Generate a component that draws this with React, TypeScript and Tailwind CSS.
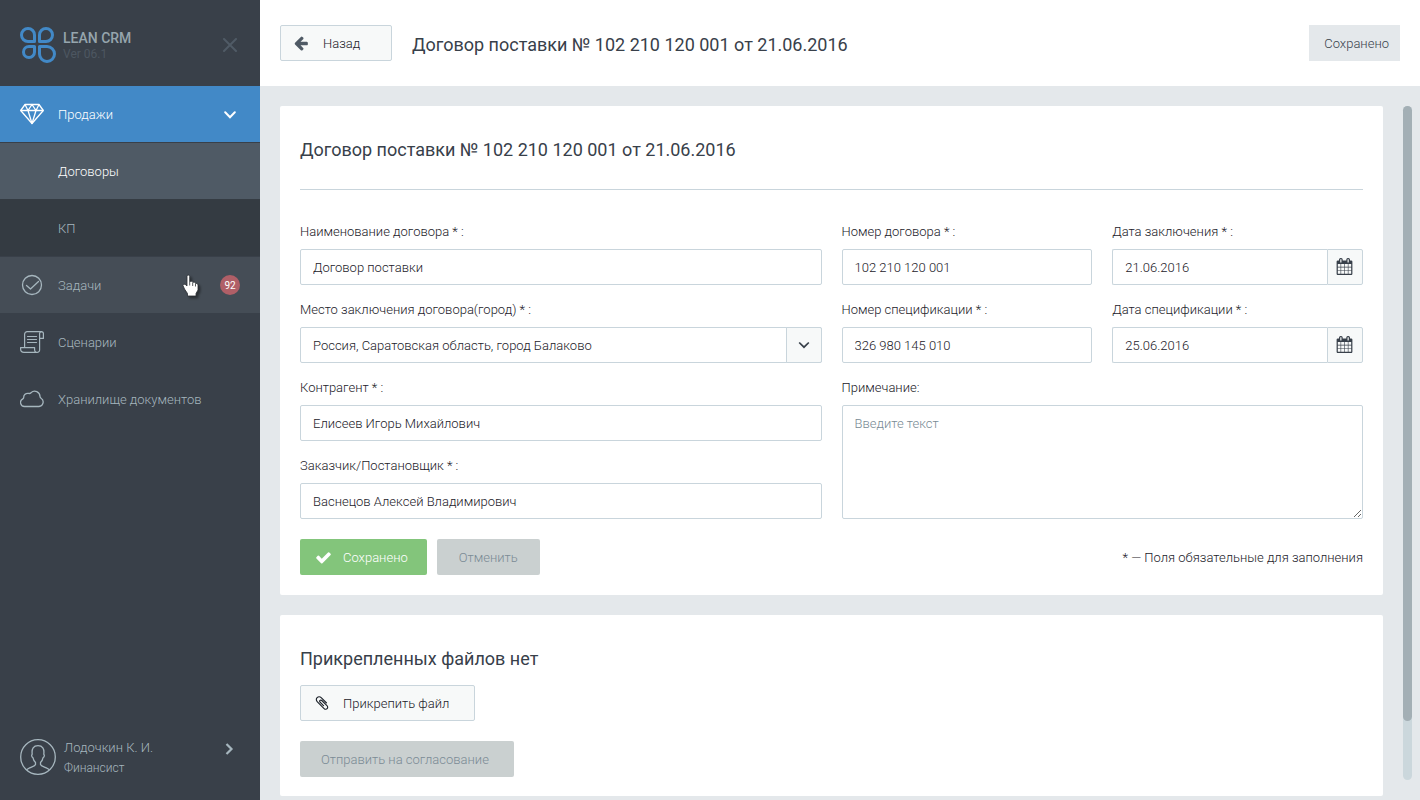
import React from "react";

type IconProps = { className?: string };

const FA = {
  arrowLeft:
    "M1664 896v128q0 53-32.5 90.5t-84.5 37.5h-704l293 294q38 36 38 90t-38 90l-75 76q-37 37-90 37-52 0-91-37l-651-652q-37-37-37-90 0-52 37-91l651-650q38-38 91-38 52 0 90 38l75 74q38 38 38 91t-38 91l-293 293h704q52 0 84.5 37.5t32.5 90.5z",
  check:
    "M1671 566q0 40-28 68l-724 724-136 136q-28 28-68 28t-68-28l-136-136-362-362q-28-28-28-68t28-68l136-136q28-28 68-28t68 28l294 295 656-657q28-28 68-28t68 28l136 136q28 28 28 68z",
  paperclip:
    "M1596 1385q0 117-79 196t-196 79q-135 0-235-100l-777-776q-113-115-113-271 0-159 110-270t269-111q158 0 273 113l605 606q10 10 10 22 0 16-30.5 46.5t-46.5 30.5q-13 0-23-10l-606-607q-79-77-181-77-106 0-179 75t-73 181q0 105 76 181l776 777q63 63 145 63 64 0 106-42t42-106q0-82-63-145l-581-581q-26-24-60-24-29 0-48 19t-19 48q0 32 25 59l410 410q10 10 10 22 0 16-31 47t-47 31q-12 0-22-10l-410-410q-63-61-63-149 0-82 57-139t139-57q88 0 149 63l581 581q100 98 100 235z",
  calendar:
    "M192 1664h288v-288h-288v288zm352 0h320v-288h-320v288zm-352-352h288v-320h-288v320zm352 0h320v-320h-320v320zm-352-384h288v-288h-288v288zm736 736h320v-288h-320v288zm-384-736h320v-288h-320v288zm768 736h288v-288h-288v288zm-384-352h320v-320h-320v320zm-352-864v-288q0-13-9.5-22.5t-22.5-9.5h-64q-13 0-22.5 9.5t-9.5 22.5v288q0 13 9.5 22.5t22.5 9.5h64q13 0 22.5-9.5t9.5-22.5zm736 864h288v-320h-288v320zm-384-384h320v-288h-320v288zm384 0h288v-288h-288v288zm32-480v-288q0-13-9.5-22.5t-22.5-9.5h-64q-13 0-22.5 9.5t-9.5 22.5v288q0 13 9.5 22.5t22.5 9.5h64q13 0 22.5-9.5t9.5-22.5zm384-64v1280q0 52-38 90t-90 38h-1408q-52 0-90-38t-38-90v-1280q0-52 38-90t90-38h128v-96q0-66 47-113t113-47h64q66 0 113 47t47 113v96h384v-96q0-66 47-113t113-47h64q66 0 113 47t47 113v96h128q52 0 90 38t38 90z",
};

function Solid({ d, className }: { d: string; className?: string }) {
  return (
    <svg viewBox="0 0 1792 1792" className={className} fill="currentColor" aria-hidden="true">
      <path d={d} />
    </svg>
  );
}

function Logo() {
  return (
    <svg width="36" height="37" viewBox="0 0 36 37" fill="none" stroke="#4289c7" strokeWidth="3" strokeLinejoin="round" aria-hidden="true">
      <path d="M14.500 14.500H8A6.500 6.500 0 1 1 14.500 8Z" />
      <path d="M19.500 14.500V8A6.500 6.500 0 1 1 26 14.500Z" />
      <path d="M14.500 19.500V25A5.500 5.500 0 1 1 9 19.500Z" />
      <path d="M19.500 19.500H27A7.500 7.500 0 1 1 19.500 27Z" />
    </svg>
  );
}

function DiamondIcon({ className }: IconProps) {
  return (
    <svg width="24" height="22" viewBox="0 0 24 22" fill="none" stroke="currentColor" strokeWidth="1.3" strokeLinejoin="round" className={className} aria-hidden="true">
      <path d="M5 1.500h14l4.300 6L12 20.500.700 7.500Z" />
      <path d="M.700 7.500h22.600M5 1.500l3 6 4-6 4 6 3-6M8 7.500l4 13 4-13" />
    </svg>
  );
}

function TaskIcon({ className }: IconProps) {
  return (
    <svg width="24" height="22" viewBox="0 0 24 22" fill="none" stroke="currentColor" strokeWidth="1.300" strokeLinecap="round" strokeLinejoin="round" className={className} aria-hidden="true">
      <circle cx="12" cy="11" r="9.500" />
      <path d="M6.500 11.500l4 3.500L18.500 7.500" />
    </svg>
  );
}

function ScrollIcon({ className }: IconProps) {
  return (
    <svg width="24" height="22" viewBox="0 0 24 22" fill="none" stroke="currentColor" strokeWidth="1.200" strokeLinejoin="round" strokeLinecap="round" className={className} aria-hidden="true">
      <path d="M4.600 16.600V3.200A2.600 2.600 0 0 1 7.200.600H21.400A2 2 0 0 1 23.400 2.800V7.400H19.600V19A2.400 2.400 0 0 1 17.200 21.400H4A3.400 3.400 0 0 1 .600 18V16.600H14.600V18.600A2.600 2.600 0 0 0 17.200 21.400" />
      <path d="M19.600 7.400V2.800A2 2 0 0 1 21.400.600M7.500 5.500h9M7.500 8.500h9M7.500 11.500h9" />
    </svg>
  );
}

function CloudIcon({ className }: IconProps) {
  return (
    <svg width="24" height="18" viewBox="0 0 24 18" fill="none" stroke="currentColor" strokeWidth="1.300" strokeLinejoin="round" className={className} aria-hidden="true">
      <path d="M4.500 16.500A4 4 0 0 1 2.800 8.900 C3.200 8.600 3.700 8.200 3.700 7.600A4 4 0 0 1 8.500 3.400C9.500 3.600 10.300 3.500 11 2.700A5.300 5.300 0 0 1 20 6.600C20 7.400 20.300 7.900 21 8.200A4.500 4.500 0 0 1 19 16.500Z" />
    </svg>
  );
}

function UserIcon() {
  return (
    <svg width="36" height="36" viewBox="0 0 36 36" fill="none" stroke="currentColor" strokeWidth="1.300" strokeLinejoin="round" aria-hidden="true">
      <circle cx="18" cy="18" r="17.300" />
      <path d="M6.500 30.800L8.500 29.500C11 28 15 27.500 15.500 25.500V23.500C14 22 13.300 20.500 13 18.800 11.800 18 11.200 16.200 12.200 15.200 11.500 9.500 13.500 6.700 18 6.700S24.500 9.500 23.800 15.200C24.800 16.200 24.200 18 23 18.800 22.700 20.500 22 22 20.500 23.500V25.500C21 27.500 25 28 27.500 29.500L29.500 30.800" />
    </svg>
  );
}

function ChevronDown() {
  return (
    <svg width="12" height="8" viewBox="0 0 12 8" fill="none" stroke="currentColor" strokeWidth="2" strokeLinecap="round" aria-hidden="true">
      <path d="M1.200 1.300L6 6.200l4.800-4.900" />
    </svg>
  );
}

function SelectArrow() {
  return (
    <svg width="12" height="8" viewBox="0 0 12 8" fill="none" stroke="currentColor" strokeWidth="1.700" aria-hidden="true">
      <path d="M1.200 1.500L6 6.200l4.800-4.700" />
    </svg>
  );
}

function Pointer() {
  return (
    <svg width="20" height="26" viewBox="0 0 20 26" className="pointer-events-none absolute top-[17px] left-[182px]" style={{ filter: "drop-shadow(2px 2px 1px rgba(0,0,0,.4))" }} aria-hidden="true">
      <path
        d="M5 2.500Q5 1 6.300 1T7.700 2.500V7.500Q10.300 6.500 10.800 8.300 13 7.500 13.500 9.300 16 9 16 11V16L14 19.500V22H5.500V19.500L2.500 15 1 11.500Q1 10 3 10.200L5 12Z"
        fill="#fff"
        stroke="#2b2f34"
        strokeWidth=".8"
      />
      <path d="M7.700 7.500v4M10.700 8.500v3.500M13.500 9.500v3" stroke="#2b2f34" strokeWidth=".8" />
    </svg>
  );
}

const control =
  "h-9 w-full rounded-[2px] border border-[#c9d5dc] bg-white px-3 text-[13px] text-[#1b2129] outline-none";
const label = "mb-[9px] block pt-px text-[13px] leading-4";
const addon =
  "flex w-9 shrink-0 items-center justify-center rounded-r-[2px] border border-[#c9d5dc] bg-[#f7f9f9] text-[#38404a]";

function Field({ id, title, value, className }: { id: string; title: string; value: string; className?: string }) {
  return (
    <div className={className}>
      <label htmlFor={id} className={label}>{title}</label>
      <input id={id} type="text" defaultValue={value} className={control} />
    </div>
  );
}

function DateField({ id, title, value }: { id: string; title: string; value: string }) {
  return (
    <div>
      <label htmlFor={id} className={label}>{title}</label>
      <div className="flex">
        <input id={id} type="text" defaultValue={value} className="h-9 w-full min-w-0 flex-1 rounded-l-[2px] border border-r-0 border-[#c9d5dc] bg-white px-3 text-[13px] text-[#1b2129] outline-none" />
        <button type="button" aria-label="Календарь" className={addon}>
          <Solid d={FA.calendar} className="mr-px mb-0.5 size-[17px]" />
        </button>
      </div>
    </div>
  );
}

function MenuLink({ icon, text, className, children }: { icon?: React.ReactNode; text: string; className?: string; children?: React.ReactNode }) {
  return (
    <li>
      <a href="#" className={`relative flex h-[57px] items-center border-t px-5 text-[13px] ${className ?? ""}`}>
        <span className="flex w-[38px] items-center">{icon}</span>
        <span className="flex-1 pt-0.5">{text}</span>
        {children}
      </a>
    </li>
  );
}

export default function App() {
  return (
    <div className="flex h-screen overflow-hidden bg-[#e4e8eb] font-['Roboto',sans-serif] font-light text-[#1b2129]">
      <aside className="flex w-[260px] shrink-0 flex-col bg-[#394049] text-[#a6b6be]">
        <div className="flex h-[86px] items-center px-5 pt-1">
          <Logo />
          <div className="ml-[7px] flex-1 pt-px">
            <div className="text-sm leading-4 font-medium text-[#96a5ad]">LEAN CRM</div>
            <div className="text-xs leading-4 font-normal text-[#4d5761]">Ver 06.1</div>
          </div>
          <button type="button" aria-label="Закрыть меню" className="flex w-5 justify-center text-[#505b66]">
            <svg width="14" height="14" viewBox="0 0 14 14" fill="none" stroke="currentColor" strokeWidth="2" strokeLinecap="round" aria-hidden="true">
              <path d="M1 1l12 12M13 1L1 13" />
            </svg>
          </button>
        </div>
        <nav>
          <a href="#" className="flex h-14 items-center bg-[#4289c7] px-5 text-[13px] text-white">
            <span className="flex w-[38px]"><DiamondIcon /></span>
            <span className="flex-1 pt-0.5">Продажи</span>
            <span className="flex w-5 justify-center pt-px"><ChevronDown /></span>
          </a>
          <ul>
            <MenuLink text="Договоры" className="border-[#394049] bg-[#4f5a65] text-white" />
            <MenuLink text="КП" className="border-[#353c43] bg-[#343b42]" />
            <MenuLink icon={<TaskIcon />} text="Задачи" className="border-[#394049] bg-[#454d56]">
              <span className="flex size-5 items-center justify-center rounded-full bg-[#b05f67] pt-px text-[10px] font-normal text-white">92</span>
              <Pointer />
            </MenuLink>
            <MenuLink icon={<ScrollIcon />} text="Сценарии" className="border-[#394049]" />
            <MenuLink icon={<CloudIcon />} text="Хранилище документов" className="border-[#394049]" />
          </ul>
        </nav>
        <a href="#" className="mt-auto mb-[22px] flex items-center px-5">
          <UserIcon />
          <span className="ml-2 flex-1 pt-0.5">
            <span className="block text-[13px] leading-5">Лодочкин К. И.</span>
            <span className="block text-xs leading-5">Финансист</span>
          </span>
          <svg width="20" height="12" viewBox="0 0 20 12" fill="none" stroke="currentColor" strokeWidth="2.200" className="mb-4" aria-hidden="true">
            <path d="M6.500 1l5 5-5 5" />
          </svg>
        </a>
      </aside>

      <div className="flex min-w-0 flex-1 flex-col">
        <header className="flex h-[86px] shrink-0 items-center gap-5 bg-white px-5">
          <button type="button" className="flex h-9 w-28 items-center rounded-[2px] border border-[#c9d5dc] bg-[#f7f9f9] pl-3 text-[13px]">
            <Solid d={FA.arrowLeft} className="mr-[14px] size-4 text-[#4f5a65]" />
            <span className="pt-0.5">Назад</span>
          </button>
          <h1 className="flex-1 pt-1 text-lg font-normal text-[#38404a]">Договор поставки № 102 210 120 001 от 21.06.2016</h1>
          <button type="button" className="h-9 bg-[#e4e8eb] pt-0.5 pr-[11px] pl-[15px] text-[13px] text-[#3a434d]">Сохранено</button>
        </header>

        <div className="flex min-h-0 flex-1 gap-5 pt-5 pr-2 pl-5">
          <main className="min-w-0 flex-1 overflow-hidden">
            <form className="rounded-[2px] bg-white px-5 pt-7 pb-5" onSubmit={(e) => e.preventDefault()}>
              <h2 className="border-b border-[#c9d5dc] pb-[23px] text-lg leading-8 font-normal text-[#38404a]">Договор поставки № 102 210 120 001 от 21.06.2016</h2>
              <div className="mt-[33px] grid grid-cols-4 gap-x-5 gap-y-4">
                <Field id="name" title="Наименование договора * :" value="Договор поставки" className="col-span-2" />
                <Field id="number" title="Номер договора * :" value="102 210 120 001" />
                <DateField id="date" title="Дата заключения * :" value="21.06.2016" />
                <div className="col-span-2">
                  <label htmlFor="place" className={label}>Место заключения договора(город) * :</label>
                  <div className="relative">
                    <select id="place" className={`${control} appearance-none pt-px`}>
                      <option>Россия, Саратовская область, город Балаково</option>
                    </select>
                    <span className={`${addon} pointer-events-none absolute inset-y-0 right-0`}>
                      <SelectArrow />
                    </span>
                  </div>
                </div>
                <Field id="spec" title="Номер спецификации * :" value="326 980 145 010" />
                <DateField id="specDate" title="Дата спецификации * :" value="25.06.2016" />
                <Field id="partner" title="Контрагент * :" value="Елисеев Игорь Михайлович" className="col-span-2" />
                <div className="col-span-2 row-span-2 flex flex-col">
                  <label htmlFor="note" className={label}>Примечание:</label>
                  <textarea id="note" placeholder="Введите текст" className="w-full flex-1 rounded-[2px] border border-[#c9d5dc] px-3 py-2 text-[13px] leading-5 outline-none placeholder:text-[#788a94]" />
                </div>
                <Field id="customer" title="Заказчик/Постановщик * :" value="Васнецов Алексей Владимирович" className="col-span-2" />
              </div>
              <div className="mt-5 flex items-center gap-2.5">
                <button type="submit" className="flex h-9 items-center rounded-[2px] bg-[#83c57b] pr-[19px] pl-[15px] text-[13px] text-white">
                  <Solid d={FA.check} className="mr-[11px] size-[17px]" />
                  <span className="pt-0.5">Сохранено</span>
                </button>
                <button type="button" className="h-9 rounded-[2px] bg-[#cad0d0] px-[22px] pt-0.5 text-[13px] text-[#7b8b95]">Отменить</button>
                <p className="ml-auto pt-0.5 text-[13px]">* — Поля обязательные для заполнения</p>
              </div>
            </form>

            <section className="mt-5 flex flex-col items-start rounded-[2px] bg-white px-5 pt-7 pb-[19px]">
              <h2 className="mb-2.5 text-lg leading-8 font-normal text-[#38404a]">Прикрепленных файлов нет</h2>
              <button type="button" className="flex h-9 items-center rounded-[2px] border border-[#c9d5dc] bg-[#f7f9f9] pr-[25px] pl-[13px] text-[13px]">
                <Solid d={FA.paperclip} className="mr-[13px] size-4" />
                <span className="pt-0.5">Прикрепить файл</span>
              </button>
              <button type="button" className="mt-5 h-9 rounded-[2px] bg-[#cad0d0] pt-0.5 pr-[25px] pl-[21px] text-[13px] text-[#7b8b95]">Отправить на согласование</button>
            </section>
          </main>
          <div className="mb-5 w-[9px] shrink-0 rounded-full bg-[#cbd7dc]">
            <div className="h-[91.3%] rounded-full bg-[#a3afb5]" />
          </div>
        </div>
      </div>
    </div>
  );
}
